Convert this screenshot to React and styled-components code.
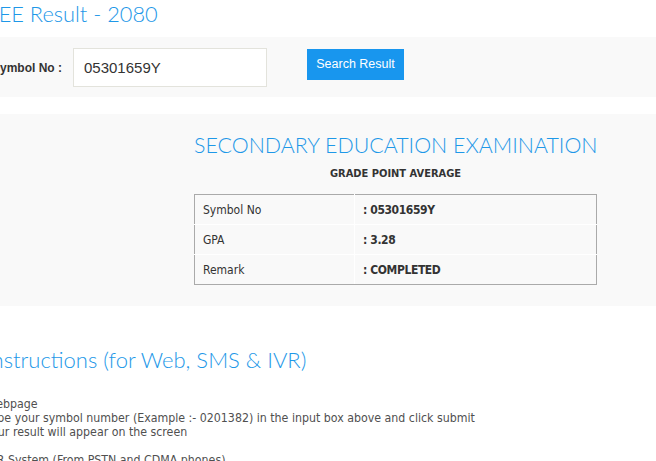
import React from 'react';
import styled, { createGlobalStyle } from 'styled-components';

const GlobalStyle = createGlobalStyle`
  html, body {
    margin: 0;
    padding: 0;
    background: #fff;
    overflow: hidden;
  }
  body {
    font-family: "DejaVu Sans Condensed", "DejaVu Sans", sans-serif;
  }
`;

const Page = styled.div`
  margin-left: -14px;
  width: calc(100% + 14px);
`;

const PageTitle = styled.h1`
  margin: 0;
  padding: 0 0 0 1px;
  height: 37px;
  font-family: "Lato", "Open Sans", sans-serif;
  font-weight: 300;
  font-size: 21.8px;
  line-height: 28px;
  color: #1e98e8;
`;

const SearchBar = styled.div`
  display: flex;
  align-items: flex-start;
  height: 60px;
  box-sizing: border-box;
  padding: 11px 0 0 6px;
  background: #f9f9f9;
`;

const Label = styled.label`
  font-family: "Liberation Sans", Arial, sans-serif;
  font-weight: bold;
  font-size: 12px;
  color: #333;
  line-height: 40px;
  width: 81px;
`;

const Input = styled.input`
  box-sizing: border-box;
  width: 194px;
  height: 39px;
  padding: 0 10px;
  border: 1px solid #e3e3dc;
  background: #fff;
  font-family: "Liberation Sans", Arial, sans-serif;
  font-size: 15px;
  color: #333;
  outline: none;
`;

const SearchButton = styled.button`
  margin: 1px 0 0 40px;
  width: 97px;
  height: 31px;
  border: none;
  background: #1896ee;
  color: #fff;
  font-family: "Liberation Sans", Arial, sans-serif;
  font-size: 12.5px;
  line-height: 29px;
  padding: 0;
  cursor: pointer;
`;

const ResultPanel = styled.div`
  margin-top: 17px;
  height: 192px;
  box-sizing: border-box;
  padding: 16px 0 0 208px;
  background: #f9f9f9;
`;

const ResultBox = styled.div`
  width: 403px;
  text-align: center;
`;

const ExamTitle = styled.h2`
  margin: 0;
  font-family: "Lato", "Open Sans", sans-serif;
  font-weight: 300;
  font-size: 21.4px;
  line-height: 30px;
  color: #1e98e8;
  white-space: nowrap;
`;

const SubTitle = styled.h3`
  margin: 6px 0 0;
  font-size: 11px;
  font-weight: bold;
  line-height: 16px;
  color: #333;
`;

const ResultTable = styled.table`
  margin-top: 12px;
  width: 403px;
  border-collapse: collapse;
  border: 1px solid #aaa;
  text-align: left;
`;

const Cell = styled.td`
  height: 29px;
  padding: 0 7px 0 8px;
  border: 1px solid #fff;
  font-size: 12px;
  color: #333;
  width: ${p => (p.$value ? 'auto' : '144px')};
  font-weight: ${p => (p.$value ? 'bold' : 'normal')};
  letter-spacing: ${p => (p.$value ? '-0.4px' : '0')};
  &:first-child { border-left-color: #aaa; }
  &:last-child { border-right-color: #aaa; }
`;

const Row = styled.tr`
  &:first-child td { border-top-color: #aaa; }
  &:last-child td { border-bottom-color: #aaa; }
`;

const Instructions = styled.div`
  padding: 39px 0 0 0;
`;

const InstructionsTitle = styled.h2`
  margin: 0;
  font-family: "Lato", "Open Sans", sans-serif;
  font-weight: 300;
  font-size: 22px;
  line-height: 30px;
  color: #1e98e8;
  white-space: nowrap;
`;

const InstructionBlock = styled.div`
  margin-top: 22px;
  font-size: 12.27px;
  line-height: 14px;
  color: #505050;
  white-space: nowrap;
`;

const Spacer = styled.div`
  height: 14px;
`;

const rows = [
  ['Symbol No', ': 05301659Y'],
  ['GPA', ': 3.28'],
  ['Remark', ': COMPLETED'],
];

export default function App() {
  return (
    <>
      <GlobalStyle />
      <Page>
        <PageTitle>SEE Result - 2080</PageTitle>
        <SearchBar>
          <Label>Symbol No :</Label>
          <Input defaultValue="05301659Y" />
          <SearchButton>Search Result</SearchButton>
        </SearchBar>
        <ResultPanel>
          <ResultBox>
            <ExamTitle>SECONDARY EDUCATION EXAMINATION</ExamTitle>
            <SubTitle>GRADE POINT AVERAGE</SubTitle>
            <ResultTable>
              <tbody>
                {rows.map(([k, v]) => (
                  <Row key={k}>
                    <Cell>{k}</Cell>
                    <Cell $value>{v}</Cell>
                  </Row>
                ))}
              </tbody>
            </ResultTable>
          </ResultBox>
        </ResultPanel>
        <Instructions>
          <InstructionsTitle>Instructions (for Web, SMS &amp; IVR)</InstructionsTitle>
          <InstructionBlock>
            <div>Webpage</div>
            <div>Type your symbol number (Example :- 0201382) in the input box above and click submit</div>
            <div>Your result will appear on the screen</div>
            <Spacer />
            <div>IVR System (From PSTN and CDMA phones)</div>
          </InstructionBlock>
        </Instructions>
      </Page>
    </>
  );
}
